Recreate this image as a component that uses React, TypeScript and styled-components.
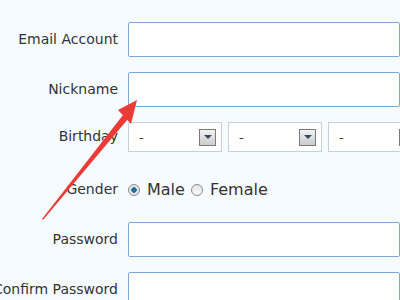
import React from 'react';
import styled, { createGlobalStyle } from 'styled-components';

const GlobalStyle = createGlobalStyle`
  html, body {
    margin: 0;
    padding: 0;
    background: #f5fbfe;
    overflow: hidden;
  }
  body {
    font-family: "DejaVu Sans", Verdana, sans-serif;
    color: #333;
  }
`;

const Page = styled.div`
  position: relative;
  width: 400px;
  height: 300px;
  overflow: hidden;
  padding-top: 22px;
  box-sizing: border-box;
`;

const Row = styled.div<{ h: number }>`
  display: flex;
  align-items: flex-start;
  height: ${({ h }) => h}px;
  margin-bottom: ${({ h }) => 50 - h}px;
`;

const Label = styled.div<{ h: number }>`
  flex: 0 0 118px;
  min-width: 0;
  display: flex;
  justify-content: flex-end;
  align-items: center;
  height: ${({ h }) => h - 2}px;
  white-space: nowrap;
  font-size: 14px;
  color: #333;
  margin-right: 10px;
`;

const TextInput = styled.input`
  width: 272px;
  height: 35px;
  box-sizing: border-box;
  border: 1px solid #7ea8d3;
  border-radius: 2px;
  background: #fff;
  padding: 0 8px;
  font-family: inherit;
  flex-shrink: 0;
`;

const Selects = styled.div`
  display: flex;
  gap: 6px;
  flex-shrink: 0;
`;

const SelectBox = styled.div`
  width: 94px;
  height: 30px;
  box-sizing: border-box;
  border: 1px solid #c9d0d4;
  background: #fff;
  display: flex;
  align-items: center;
  justify-content: space-between;
  padding: 0 5px 0 10px;
  font-size: 13px;
  color: #333;
  flex-shrink: 0;
`;

const DropButton = styled.span`
  width: 17px;
  height: 17px;
  box-sizing: border-box;
  border: 1px solid #7a7a7a;
  background: linear-gradient(#f2f2f2, #c9cbce);
  display: flex;
  align-items: center;
  justify-content: center;
  &::after {
    content: '';
    border-left: 4px solid transparent;
    border-right: 4px solid transparent;
    border-top: 4px solid #3a4a5a;
  }
`;

const RadioGroup = styled.div`
  display: flex;
  align-items: center;
  height: 35px;
  font-size: 16px;
  color: #333;
`;

const Radio = styled.span<{ checked?: boolean }>`
  width: 12px;
  height: 12px;
  box-sizing: border-box;
  border-radius: 50%;
  border: 1px solid #8a8a8a;
  background: ${({ checked }) =>
    checked
      ? 'radial-gradient(circle, #1f6f9c 0 2.5px, #e4e8ea 3px)'
      : 'linear-gradient(#e6e6e6, #fafafa)'};
  margin-right: 7px;
`;

const Option = styled.label`
  display: flex;
  align-items: center;
  margin-right: 6px;
`;

const ArrowOverlay = styled.svg`
  position: absolute;
  left: 0;
  top: 0;
  pointer-events: none;
`;

const Select: React.FC = () => (
  <SelectBox>
    <span>-</span>
    <DropButton />
  </SelectBox>
);

export default function App() {
  return (
    <Page>
      <GlobalStyle />
      <Row h={35}>
        <Label h={35}>Email Account</Label>
        <TextInput />
      </Row>
      <Row h={35}>
        <Label h={35}>Nickname</Label>
        <TextInput />
      </Row>
      <Row h={30}>
        <Label h={30}>Birthday</Label>
        <Selects>
          <Select />
          <Select />
          <Select />
        </Selects>
      </Row>
      <Row h={35}>
        <Label h={35}>Gender</Label>
        <RadioGroup>
          <Option>
            <Radio checked />
            Male
          </Option>
          <Option>
            <Radio />
            Female
          </Option>
        </RadioGroup>
      </Row>
      <Row h={35}>
        <Label h={35}>Password</Label>
        <TextInput type="password" />
      </Row>
      <Row h={35}>
        <Label h={35}>Confirm Password</Label>
        <TextInput type="password" />
      </Row>
      <ArrowOverlay width="400" height="300" viewBox="0 0 400 300">
        <path d="M42 219 L123 115 L128 119 L43 220 Z" fill="#ea3b36" />
        <path d="M137 100 L118 110 L131 124 Z" fill="#ea3b36" />
      </ArrowOverlay>
    </Page>
  );
}
